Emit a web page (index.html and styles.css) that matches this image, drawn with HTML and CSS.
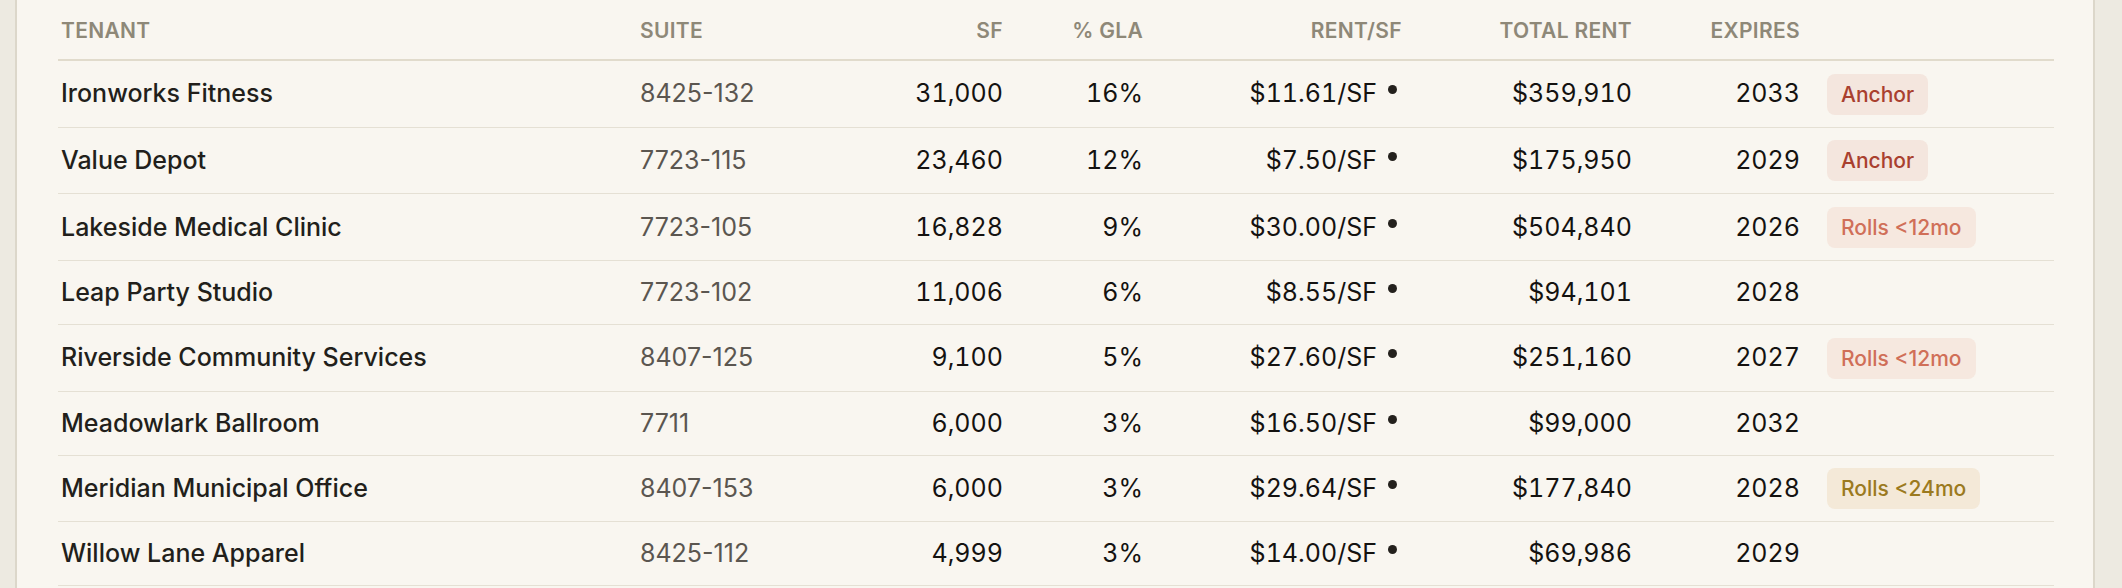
FILE: index.html
```html
<!DOCTYPE html>
<html lang="en">
<head>
<meta charset="utf-8">
<title>Rent Roll</title>
<link rel="stylesheet" href="styles.css">
</head>
<body>
<div class="page">
  <section class="card">
    <table class="roll">
      <colgroup>
        <col class="c-tenant"><col class="c-suite"><col class="c-sf"><col class="c-gla"><col class="c-rent"><col class="c-total"><col class="c-exp"><col class="c-tag">
      </colgroup>
      <thead>
        <tr>
          <th class="tl">Tenant</th>
          <th class="tl">Suite</th>
          <th class="tr">SF</th>
          <th class="tr">% GLA</th>
          <th class="tr">Rent/SF</th>
          <th class="tr">Total Rent</th>
          <th class="tr">Expires</th>
          <th></th>
        </tr>
      </thead>
      <tbody>
        <tr>
          <td class="tenant">Ironworks Fitness</td>
          <td class="suite">8425-132</td>
          <td class="num">31,000</td>
          <td class="num">16%</td>
          <td class="num">$11.61/SF<span class="dot"></span></td>
          <td class="num">$359,910</td>
          <td class="num">2033</td>
          <td class="tag"><span class="badge anchor">Anchor</span></td>
        </tr>
        <tr>
          <td class="tenant">Value Depot</td>
          <td class="suite">7723-115</td>
          <td class="num">23,460</td>
          <td class="num">12%</td>
          <td class="num">$7.50/SF<span class="dot"></span></td>
          <td class="num">$175,950</td>
          <td class="num">2029</td>
          <td class="tag"><span class="badge anchor">Anchor</span></td>
        </tr>
        <tr>
          <td class="tenant">Lakeside Medical Clinic</td>
          <td class="suite">7723-105</td>
          <td class="num">16,828</td>
          <td class="num">9%</td>
          <td class="num">$30.00/SF<span class="dot"></span></td>
          <td class="num">$504,840</td>
          <td class="num">2026</td>
          <td class="tag"><span class="badge roll12">Rolls &lt;12mo</span></td>
        </tr>
        <tr>
          <td class="tenant">Leap Party Studio</td>
          <td class="suite">7723-102</td>
          <td class="num">11,006</td>
          <td class="num">6%</td>
          <td class="num">$8.55/SF<span class="dot"></span></td>
          <td class="num">$94,101</td>
          <td class="num">2028</td>
          <td class="tag"></td>
        </tr>
        <tr>
          <td class="tenant">Riverside Community Services</td>
          <td class="suite">8407-125</td>
          <td class="num">9,100</td>
          <td class="num">5%</td>
          <td class="num">$27.60/SF<span class="dot"></span></td>
          <td class="num">$251,160</td>
          <td class="num">2027</td>
          <td class="tag"><span class="badge roll12">Rolls &lt;12mo</span></td>
        </tr>
        <tr>
          <td class="tenant">Meadowlark Ballroom</td>
          <td class="suite">7711</td>
          <td class="num">6,000</td>
          <td class="num">3%</td>
          <td class="num">$16.50/SF<span class="dot"></span></td>
          <td class="num">$99,000</td>
          <td class="num">2032</td>
          <td class="tag"></td>
        </tr>
        <tr>
          <td class="tenant">Meridian Municipal Office</td>
          <td class="suite">8407-153</td>
          <td class="num">6,000</td>
          <td class="num">3%</td>
          <td class="num">$29.64/SF<span class="dot"></span></td>
          <td class="num">$177,840</td>
          <td class="num">2028</td>
          <td class="tag"><span class="badge roll24">Rolls &lt;24mo</span></td>
        </tr>
        <tr>
          <td class="tenant">Willow Lane Apparel</td>
          <td class="suite">8425-112</td>
          <td class="num">4,999</td>
          <td class="num">3%</td>
          <td class="num">$14.00/SF<span class="dot"></span></td>
          <td class="num">$69,986</td>
          <td class="num">2029</td>
          <td class="tag"></td>
        </tr>
      </tbody>
    </table>
  </section>
</div>
</body>
</html>
```

FILE: styles.css
```css
html, body {
  margin: 0;
  padding: 0;
  background: #edeae1;
}

body {
  font-family: Inter, "Noto Sans", "Liberation Sans", sans-serif;
  color: #1b1815;
}

.page {
  padding: 0 27px 0 15px;
  height: 588px;
  overflow: hidden;
}

.card {
  background: #f9f6f0;
  border-left: 2px solid #dcd7ca;
  border-right: 2px solid #dcd7ca;
  padding: 3px 39px 0 41px;
  min-height: 100%;
  box-sizing: border-box;
}

.roll {
  width: 100%;
  table-layout: fixed;
  border-collapse: collapse;
}

.c-tenant { width: 568px; }
.c-suite { width: 224px; }
.c-sf { width: 167px; }
.c-gla { width: 140px; }
.c-rent { width: 259px; }
.c-total { width: 230px; }
.c-exp { width: 168px; }
.c-tag { width: 240px; }

.roll th {
  font-size: 21px;
  line-height: 32px;
  font-weight: 600;
  letter-spacing: 0.015em;
  text-transform: uppercase;
  color: #8e8878;
  padding: 12px 14px 12px 14px;
  border-bottom: 2px solid #e1dbcc;
  white-space: nowrap;
}

.roll th.tl { text-align: left; }
.roll th.tr { text-align: right; }
.roll th:first-child { padding-left: 3px; }

.roll td {
  font-size: 25px;
  line-height: 39px;
  padding: 12px 14px;
  border-bottom: 1px solid #e5e0d4;
  vertical-align: middle;
  white-space: nowrap;
}

.roll td.tenant {
  padding-left: 3px;
  color: #221f1b;
  font-weight: 500;
}

.roll td.suite {
  color: #5b5650;
}

.roll td.num {
  text-align: right;
  color: #141210;
  font-variant-numeric: tabular-nums;
}

.roll td.tag {
  padding-left: 13px;
  padding-right: 0;
}

.dot {
  display: inline-block;
  width: 9px;
  height: 9px;
  border-radius: 50%;
  background: #24211d;
  margin-left: 11px;
  margin-right: 5px;
  vertical-align: 8px;
}

.badge {
  display: inline-block;
  font-size: 21px;
  line-height: 29px;
  font-weight: 500;
  padding: 6px 14px;
  border-radius: 8px;
  vertical-align: middle;
}

.badge.anchor {
  background: #f4e6de;
  color: #a9402f;
}

.badge.roll12 {
  background: #f6e8df;
  color: #d06f58;
}

.badge.roll24 {
  background: #f4e9d8;
  color: #9b7a20;
}
```
